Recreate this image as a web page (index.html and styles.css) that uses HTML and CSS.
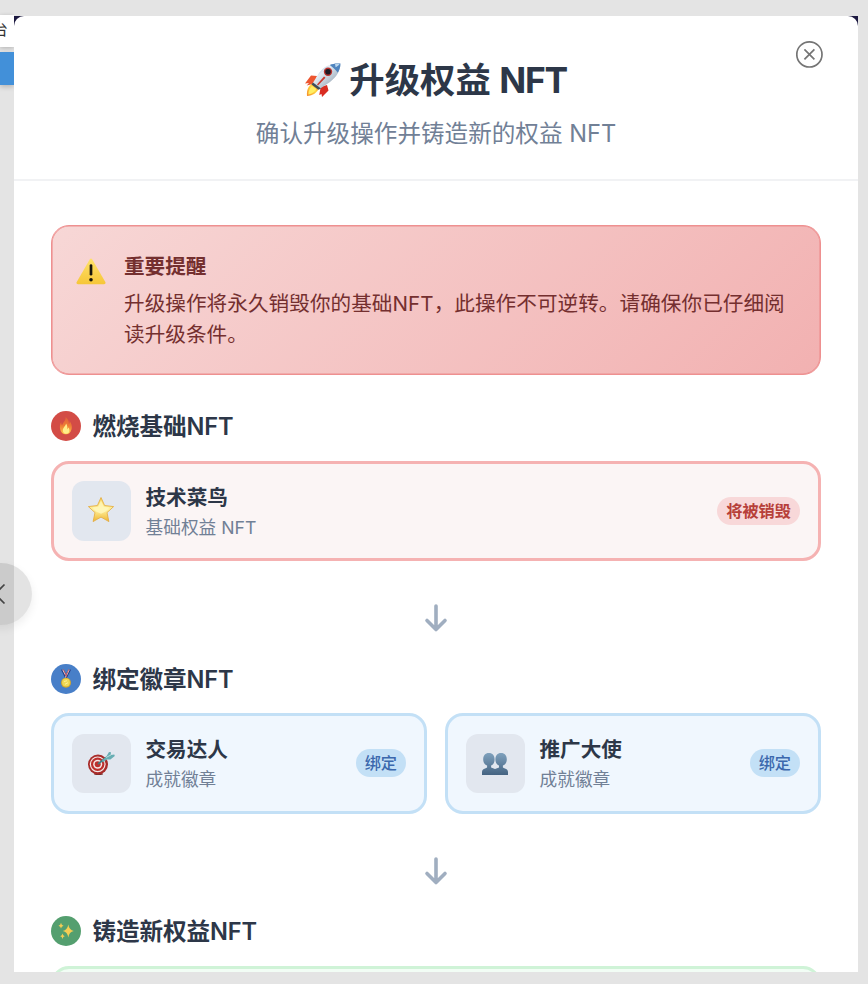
FILE: index.html
```html
<!DOCTYPE html>
<html lang="zh-CN">
<head>
<meta charset="utf-8">
<title>升级权益 NFT</title>
<link rel="stylesheet" href="styles.css">
</head>
<body>
<div class="backdrop">
  <div class="strip-top"><span>台</span></div>
  <div class="strip-blue"></div>
</div>
<div class="frame">
<main class="modal">
  <button class="close" aria-label="关闭">
    <svg viewBox="0 0 28 28" width="28" height="28" fill="none" stroke="#757575" stroke-width="1.7"><circle cx="14.400" cy="14.400" r="12.600"/><path d="M9.400 9.400l10 10M19.400 9.400l-10 10"/></svg>
  </button>
  <header class="header">
    <h1 class="title">
      <svg class="rocket" viewBox="0 0 36 34" width="36" height="34">
        <defs>
          <linearGradient id="hull" x1="0" y1="0" x2="1" y2="1"><stop offset="0" stop-color="#5785b8"/><stop offset=".35" stop-color="#e3edf5"/><stop offset=".65" stop-color="#b4c1cd"/><stop offset="1" stop-color="#536473"/></linearGradient>
          <linearGradient id="flame" x1="1" y1="0" x2="0" y2="1"><stop offset="0" stop-color="#f0532b"/><stop offset=".45" stop-color="#ffd83e"/><stop offset="1" stop-color="#f58a2b"/></linearGradient>
        </defs>
        <path d="M12 13L6 12.500 0 20.500l4-.6-2.300 2.600 8-2z" fill="#ed5630"/>
        <path d="M22 22l1.500 5.500-6.500 6.500-.5-3-2.300 1 1.500-8z" fill="#d92d22"/>
        <path d="M8 20C3 23 1.500 27 2 33c6-.5 10-3 12-8z" fill="url(#flame)"/>
        <path d="M7 23c-2.500 2.500-3.700 5-3.600 8.500 4-.8 6.500-2.500 8-5.500z" fill="#ffee63"/>
        <path d="M35.400.6C27-.5 19 3 14 10l-6.500 10.500 7 5.500L25 19c6.500-5 10.500-11 10.400-18.400z" fill="url(#hull)"/>
        <path d="M35.400.6c-4-.5-7.500 0-10.600 1.300 2.800 2.100 5.800 4.600 8 7.800 1.700-2.700 2.700-5.800 2.600-9.100z" fill="#4f84bf"/>
        <path d="M30 1c1.500 0 3.200-.3 4.600.3-1.300 1.600-2.600 2.400-4 2.900z" fill="#b9d6ee"/>
        <path d="M8 19.500l8 6-2.500 1.300-7-5.200z" fill="#3d4c59"/>
        <path d="M19 13.500l-7 8 1 .9 7.500-7.700z" fill="#c9382d"/>
        <circle cx="23" cy="8.700" r="4.200" fill="#b93430"/><circle cx="23" cy="8.700" r="2.800" fill="#1c1b25"/>
      </svg>
      <span>升级权益 <span class="latin">NFT</span></span>
    </h1>
    <p class="subtitle">确认升级操作并铸造新的权益 NFT</p>
  </header>
  <div class="body">
    <section class="alert">
      <svg viewBox="0 0 30 27" width="30" height="27" class="warn">
        <defs><linearGradient id="sign" x1="0" y1="0" x2="0" y2="1"><stop offset="0" stop-color="#ffe16a"/><stop offset="1" stop-color="#f6c638"/></linearGradient></defs>
        <path d="M13.700 1.600q1.300-2 2.600 0L29.300 24q.9 2-1.200 2.200H1.900Q-.2 26 .7 24z" fill="url(#sign)"/>
        <path d="M15 7.500v8.700" stroke="#17150c" stroke-width="2.700" stroke-linecap="round"/><circle cx="15" cy="21.800" r="1.800" fill="#17150c"/>
      </svg>
      <div class="alert-text">
        <h2>重要提醒</h2>
        <p>升级操作将永久销毁你的基础NFT，此操作不可逆转。请确保你已仔细阅读升级条件。</p>
      </div>
    </section>

    <section>
      <div class="section-head">
        <span class="dot red">
          <svg viewBox="0 0 16 18" width="16" height="18">
            <defs><linearGradient id="fire" x1="0" y1="0" x2="0" y2="1"><stop offset="0" stop-color="#e2603a"/><stop offset=".5" stop-color="#ee7c35"/><stop offset="1" stop-color="#ffc84a"/></linearGradient></defs>
            <path d="M7.600 0c2.800 2.300 3.400 4.500 3.200 7 .8-.4 1-1.500.8-3 2 2.500 2.600 5.200 2 8-.7 3.500-2.700 5.300-5.700 5.300S2.700 15.300 2.100 12C1.600 9.200 2 7 3.300 5c-.2 1.700.1 2.700.9 3.300C4.700 5.500 7.900 4 7.600 0z" fill="url(#fire)"/>
            <path d="M8 6.500c-.2 2.500-3.200 4-3.200 7 0 2 1.300 3.200 3.200 3.200s3.400-1.200 3.400-3.300c0-1.300-.4-2.200-1-2.800-.2.900-.6 1.400-1.100 1.600.2-2.200-.1-4.100-1.300-5.700z" fill="#ffed8a"/>
          </svg>
        </span>
        <h2>燃烧基础NFT</h2>
      </div>
      <div class="cards">
        <article class="card burn">
          <span class="thumb star">
            <svg viewBox="0 0 28 27" width="28" height="27">
              <defs><linearGradient id="gold" x1="0" y1="0" x2="0" y2="1"><stop offset="0" stop-color="#f7d257"/><stop offset=".5" stop-color="#fff2a1"/><stop offset="1" stop-color="#efb530"/></linearGradient></defs>
              <path d="M14 1.500l3.600 8 9 1.100-6.600 6 1.900 9L14 21.100l-7.900 4.500 1.900-9-6.600-6 9-1.100z" fill="url(#gold)" stroke="#e3a93b" stroke-width=".8" stroke-linejoin="round"/>
              <path d="M14 4.500l2.800 6.300 5.700.8-4.200 4.100-4.300 2-4.500-2-4-4.100 5.700-.8z" fill="#fff7bd" opacity=".8"/>
            </svg>
          </span>
          <div class="info"><h3>技术菜鸟</h3><p>基础权益 NFT</p></div>
          <span class="pill">将被销毁</span>
        </article>
      </div>
    </section>

    <div class="arrow"><svg viewBox="0 0 24 30" width="24" height="30" fill="none" stroke="#a0aec0" stroke-width="3.600" stroke-linecap="round" stroke-linejoin="round"><path d="M12 3v23.500M3 17.500l9 9 9-9"/></svg></div>

    <section>
      <div class="section-head">
        <span class="dot blue">
          <svg viewBox="0 0 12 20" width="12" height="20">
            <path d="M1 .8L3.500.3 7.500 8 5.300 9.200z" fill="#293c82"/><path d="M2.300.7l1.100-.2 3.800 7.800-.8.4z" fill="#f2eef1"/>
            <path d="M11 .8L8.500.3 4.500 8l2.200 1.200z" fill="#293c82"/><path d="M9.700.7L8.500.5 5 8.300l.8.4z" fill="#f2eef1"/><path d="M3 .5l.7-.1 3.500 7-.6.7zM8.500.4l.7.1-3.200 7-.6-.5z" fill="#c94246"/>
            <circle cx="6" cy="13.700" r="5" fill="#d6a82d"/><circle cx="6" cy="13.500" r="3.900" fill="#efd956"/><path d="M4 12.500l3-.8M5 15.300l3-1.600" stroke="#fff09b"/>
          </svg>
        </span>
        <h2>绑定徽章NFT</h2>
      </div>
      <div class="cards">
        <article class="card bind">
          <span class="thumb">
            <svg viewBox="0 0 28 25" width="28" height="25">
              <ellipse cx="11.500" cy="23" rx="4.500" ry="1" fill="#722a27"/>
              <circle cx="11" cy="13.500" r="10" fill="#a82c2a"/><circle cx="10.700" cy="13.300" r="7.900" fill="#f3e7e6"/><circle cx="10.700" cy="13.300" r="6.700" fill="#bd302d"/><circle cx="10.700" cy="13.300" r="4.500" fill="#f3e7e6"/><circle cx="10.700" cy="13.300" r="3" fill="#bd302d"/>
              <path d="M11 13L20 6" stroke="#3c7d80" stroke-width="1.600"/>
              <path d="M15 9.500l4.500-4.300L22 1l2 .2-.3 2.700 3.600-.3.500 1.400-4.400 3.400-3.800.2-3.600 3z" fill="#68aeb3"/><path d="M19 6.500l5-2.600" stroke="#b7dedf"/>
            </svg>
          </span>
          <div class="info"><h3>交易达人</h3><p>成就徽章</p></div>
          <span class="pill">绑定</span>
        </article>
        <article class="card bind">
          <span class="thumb people">
            <svg viewBox="0 0 28 24" width="28" height="24">
              <defs><linearGradient id="bust" x1="0" y1="0" x2="0" y2="1"><stop offset="0" stop-color="#7fa1bd"/><stop offset="1" stop-color="#456482"/></linearGradient></defs>
              <path d="M1 24v-3c0-2 1.200-3 3.100-3.600l2-.8v-2C3.700 13.600 2.200 11.400 2.200 8.400 2.200 4.600 4.200 2 7.900 2s5.700 2.600 5.700 6.400c0 3-1.300 5.200-3.500 6.200v2l3.900 1.500 4-1.500v-2c-2.200-1-3.600-3.200-3.600-6.200C14.400 4.600 16.400 2 20.100 2s5.700 2.600 5.700 6.400c0 3-1.500 5.200-3.900 6.200v2l2 .8c1.900.6 3.100 1.600 3.100 3.600v3z" fill="url(#bust)"/>
            </svg>
          </span>
          <div class="info"><h3>推广大使</h3><p>成就徽章</p></div>
          <span class="pill">绑定</span>
        </article>
      </div>
    </section>

    <div class="arrow"><svg viewBox="0 0 24 30" width="24" height="30" fill="none" stroke="#a0aec0" stroke-width="3.600" stroke-linecap="round" stroke-linejoin="round"><path d="M12 3v23.500M3 17.500l9 9 9-9"/></svg></div>

    <section>
      <div class="section-head">
        <span class="dot green">
          <svg viewBox="0 0 18 18" width="18" height="18" fill="#f5cd54">
            <path d="M11.300 2.600q.8 5.500 5.500 6.400-4.700.9-5.500 6.400-.8-5.500-5.500-6.400 4.700-.9 5.500-6.400zM4 .8q.4 2.500 2.500 2.900Q4.400 4.100 4 6.600 3.600 4.100 1.500 3.700 3.600 3.300 4 .8zM5.500 11.500q.4 2.300 2.300 2.700-1.900.4-2.300 2.700-.4-2.300-2.300-2.700 1.900-.4 2.300-2.700z"/>
          </svg>
        </span>
        <h2>铸造新权益NFT</h2>
      </div>
      <div class="cards"><article class="card mint"></article></div>
    </section>
  </div>
</main>
</div>
<button class="drawer" aria-label="返回"><svg viewBox="0 0 12 22" width="12" height="22" fill="none" stroke="#444" stroke-width="1.700"><path d="M10.500 1.500L1 11l9.500 9.500"/></svg></button>
</body>
</html>
```

FILE: styles.css
```css
* { box-sizing: border-box; }
body {
  margin: 0;
  width: 868px;
  height: 984px;
  overflow: hidden;
  position: relative;
  display: flex;
  background: #e4e4e4;
  color: #2d3748;
  font-family: Inter, "Noto Sans CJK SC", sans-serif;
}
h1, h2, h3, p { margin: 0; }
button { border: 0; padding: 0; background: none; }
svg { display: block; flex: none; }

.backdrop { width: 14px; padding-top: 15px; overflow: hidden; flex: none; }
.strip-top {
  height: 32px;
  background: #fff;
  box-shadow: 0 1px 4px rgba(0, 0, 0, .22);
  display: flex;
  justify-content: flex-end;
  padding-right: 6px;
  font-size: 16px;
  line-height: 28px;
  color: #333;
}
.strip-blue { margin-top: 5px; height: 33px; background: #4290d9; box-shadow: 0 2px 5px rgba(0, 0, 0, .2); }

.frame { width: 844px; height: 956px; margin-top: 16px; background: #1c1940; flex: none; }
.modal {
  position: relative;
  height: 956px;
  background: #fff;
  border-radius: 10px 10px 0 0;
  overflow: hidden;
}
.close { position: absolute; top: 24px; right: 35px; }

.header { height: 165px; border-bottom: 2px solid #f1f2f4; padding-top: 39px; }
.title {
  display: flex;
  justify-content: center;
  align-items: center;
  gap: 8px;
  height: 52px;
  font-size: 35.4px;
  line-height: 52px;
  font-weight: 700;
  white-space: nowrap;
}
.latin { letter-spacing: -1.3px; }
.rocket { margin-top: -2px; }
.subtitle { margin-top: 9px; text-align: center; font-size: 23.6px; line-height: 36px; color: #718096; }

.body { padding: 44px 37px 0; }
.alert {
  display: flex;
  gap: 18px;
  height: 149.5px;
  padding: 25px 24px 0 24px;
  border: 1px solid #ee9090;
  border-radius: 18px;
  background: linear-gradient(135deg, #f7d7d6, #f2b1b1);
  box-shadow: inset 0 0 0 .6px #ee9090;
  color: #742f2f;
}
.warn { margin-top: 7px; }
.alert h2 { font-size: 20.6px; line-height: 31px; font-weight: 700; }
.alert p { margin-top: 6px; font-size: 20.6px; line-height: 31px; letter-spacing: .06px; }

.section-head { display: flex; align-items: center; gap: 11.500px; height: 36px; }
.alert + section { margin-top: 34px; }
.section-head h2 { font-size: 23.6px; line-height: 36px; font-weight: 600; letter-spacing: -.1px; padding-top: 1px; }
.dot { width: 30px; height: 30px; margin-top: -1px; border-radius: 50%; display: flex; align-items: center; justify-content: center; }
.red { background: #d34c46; }
.blue { background: #487fc8; }
.green { background: #549f6f; }

.cards { display: flex; gap: 18px; margin-top: 16px; }
.card {
  flex: 1;
  display: flex;
  align-items: center;
  height: 100.5px;
  padding: 0 18px 0 17.5px;
  border: 3px solid;
  border-radius: 18px;
}
.burn { border-color: #f5b2b2; background: #fbf5f5; }
.bind { border-color: #c3e0f6; background: #f0f7fe; }
.mint { border-color: #cff3d7; background: #f2fdf5; }
.thumb { width: 59.500px; height: 59.500px; border-radius: 12px; background: #e2e7ef; display: flex; align-items: center; justify-content: center; }
.thumb svg { margin-left: -1px; }
.star svg { margin-top: -2px; }
.info { flex: 1; margin-left: 14.500px; padding-top: 3px; }
.info h3 { font-size: 20.6px; line-height: 30px; font-weight: 600; }
.info p { font-size: 17.7px; line-height: 29px; color: #718096; }
.pill { height: 28px; padding: 0 9px; border-radius: 14px; font-size: 16.200px; line-height: 28px; font-weight: 600; }
.burn .pill { background: #f8d8d9; color: #b73f39; }
.bind .pill { background: #c3e0f6; color: #3b68ad; font-weight: 500; }

.arrow { height: 100px; padding-top: 42px; display: flex; justify-content: center; }

.drawer {
  position: absolute;
  left: -30px;
  top: 563px;
  width: 62px;
  height: 62px;
  border-radius: 50%;
  background: rgba(0, 0, 0, .11);
  box-shadow: 0 4px 10px rgba(0, 0, 0, .07);
  display: flex;
  align-items: center;
  padding-left: 24px;
}
```
